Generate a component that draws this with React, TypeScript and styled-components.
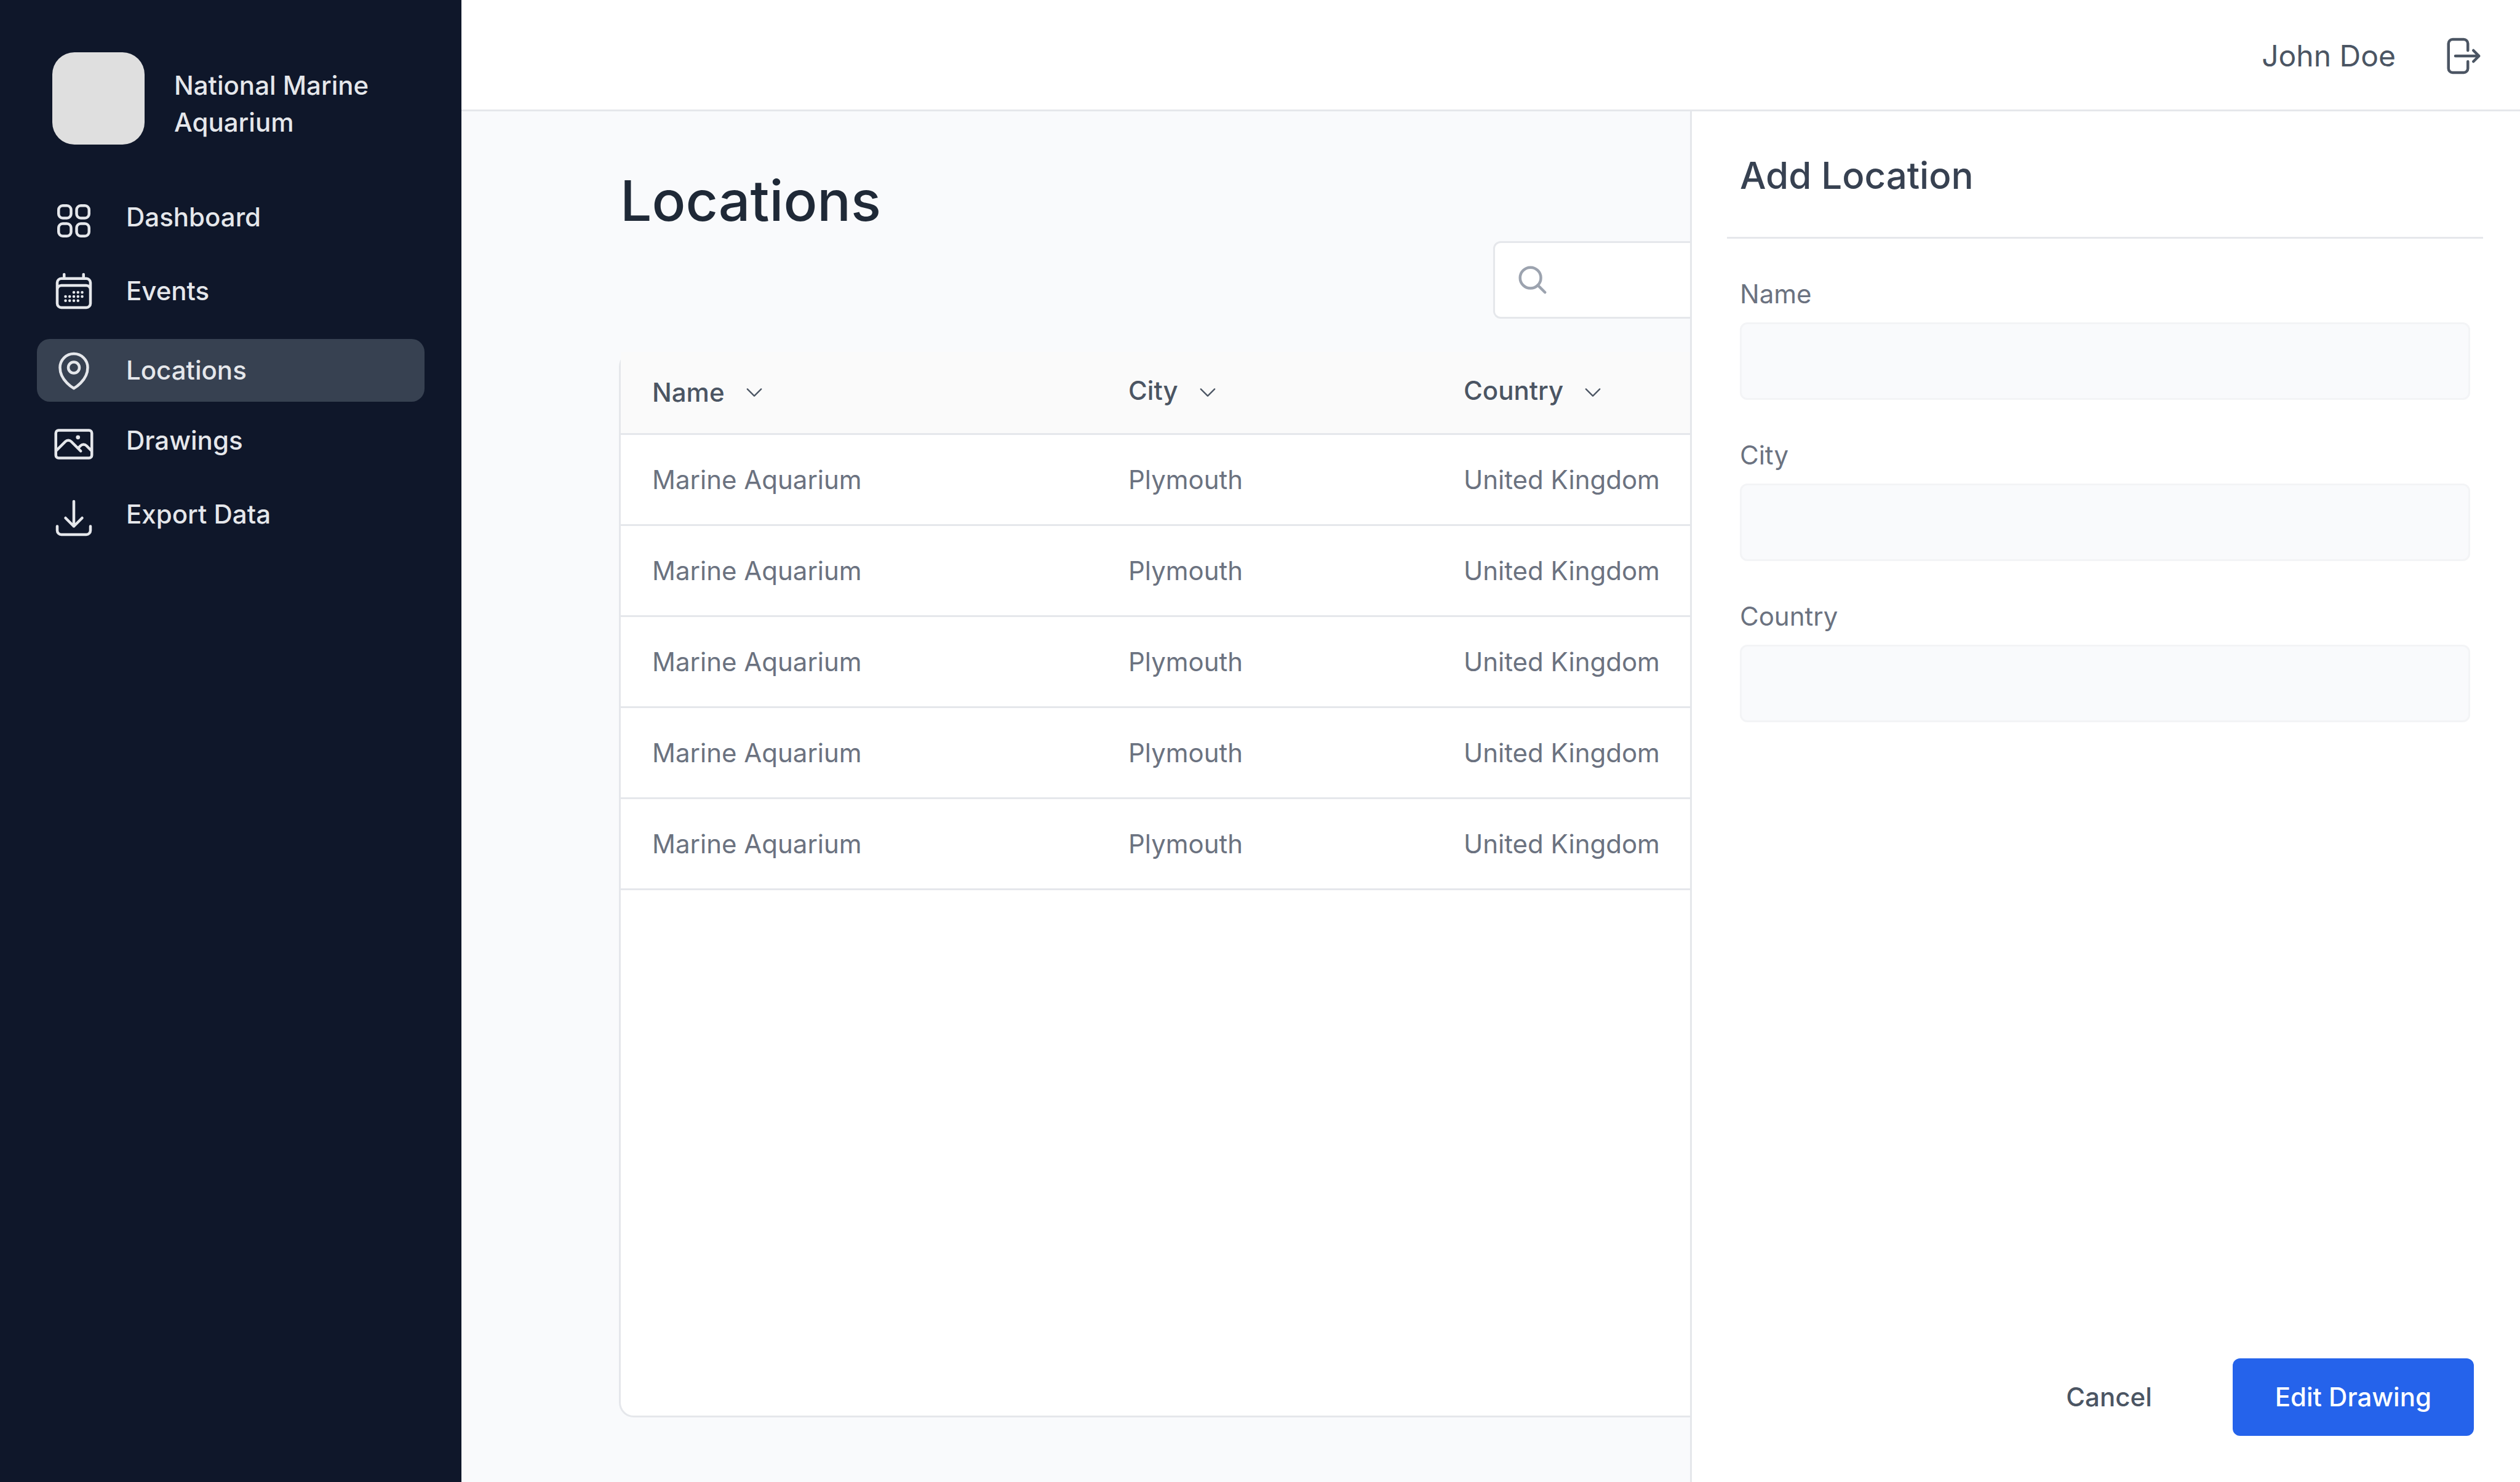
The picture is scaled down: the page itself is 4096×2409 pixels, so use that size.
import React from 'react';
import styled, { createGlobalStyle } from 'styled-components';

const color = {
  navy: '#0f172a',
  active: '#374151',
  onNavy: '#e5e7eb',
  page: '#f9fafc',
  white: '#ffffff',
  tableHead: '#fafafa',
  line: '#e5e7eb',
  fieldLine: '#f3f4f6',
  ink: '#1f2937',
  heading: '#374151',
  strong: '#4b5563',
  muted: '#6b7280',
  faint: '#9ca3af',
  primary: '#2563eb',
};

const GlobalStyle = createGlobalStyle`
  *, *::before, *::after { box-sizing: border-box; }
  body {
    margin: 0;
    font-family: Inter, 'Liberation Sans', sans-serif;
    font-size: 42px;
    line-height: 60px;
    color: ${color.strong};
    background: ${color.page};
  }
  button, input { font: inherit; color: inherit; }
  h1, h2, p, ul { margin: 0; padding: 0; }
`;

const Shell = styled.div`
  display: flex;
  min-height: 100vh;
`;

const Sidebar = styled.aside`
  flex: none;
  width: 750px;
  padding: 85px 60px;
  background: ${color.navy};
  color: ${color.onNavy};
  font-weight: 500;
`;

const Brand = styled.div`
  display: flex;
  align-items: flex-start;
  gap: 48px;
  padding-left: 25px;
  margin-bottom: 73px;
`;

const BrandMark = styled.div`
  flex: none;
  width: 150px;
  height: 150px;
  border-radius: 36px;
  background: #dfdfdf;
`;

const BrandName = styled.p`
  max-width: 340px;
  padding-top: 24px;
`;

const Nav = styled.nav`
  display: flex;
  flex-direction: column;
  gap: 27px;
`;

const NavGroup = styled.ul<{ $gap: number }>`
  display: flex;
  flex-direction: column;
  gap: ${(p) => p.$gap}px;
  list-style: none;
`;

type Align = 'center' | 'flex-start';

const NavLink = styled.a<{ $active?: boolean; $align: Align }>`
  display: flex;
  align-items: ${(p) => p.$align};
  gap: 49px;
  padding: 15px 24px;
  border-radius: 21px;
  color: inherit;
  text-decoration: none;
  background: ${(p) => (p.$active ? color.active : 'transparent')};
`;

const Svg = styled.svg<{ $w: number; $h?: number }>`
  flex: none;
  display: block;
  width: ${(p) => p.$w}px;
  height: ${(p) => p.$h ?? p.$w}px;
  fill: none;
  stroke: currentColor;
  stroke-width: 1.5;
  stroke-linecap: round;
  stroke-linejoin: round;
`;

const Body = styled.div`
  flex: 1;
  min-width: 0;
  display: flex;
  flex-direction: column;
`;

const TopBar = styled.header`
  display: flex;
  justify-content: flex-end;
  align-items: center;
  gap: 70px;
  height: 181px;
  padding: 0 60px;
  background: ${color.white};
  box-shadow: inset 0 -3px ${color.line};
  font-size: 48px;
`;

const IconButton = styled.button`
  padding: 0;
  border: 0;
  background: none;
`;

const Content = styled.div`
  position: relative;
  flex: 1;
  display: flex;
`;

const Main = styled.main`
  flex: 1;
  min-width: 0;
  display: flex;
  flex-direction: column;
  padding: 91px 256px 105px;
`;

const PageTitle = styled.h1`
  padding-left: 2px;
  font-size: 91px;
  font-weight: 500;
  line-height: 108px;
  color: ${color.ink};
`;

const SearchBox = styled.label`
  display: flex;
  align-items: center;
  align-self: flex-end;
  gap: 24px;
  width: 1413px;
  height: 126px;
  margin: 12px 0 54px;
  padding: 0 25px;
  border: 3px solid ${color.line};
  border-radius: 12px;
  background: ${color.white};
  color: ${color.faint};
`;

const SearchInput = styled.input`
  flex: 1;
  min-width: 0;
  border: 0;
  outline: 0;
  background: none;
`;

const Card = styled.section`
  flex: 1;
  border: 3px solid ${color.line};
  border-top: 0;
  border-radius: 24px;
  background: ${color.white};
`;

const Table = styled.table`
  width: 100%;
  border-collapse: separate;
  border-spacing: 0;
  table-layout: fixed;
  text-align: left;
`;

const Col = styled.col<{ $width?: number }>`
  width: ${(p) => (p.$width ? `${p.$width}px` : 'auto')};
`;

const HeadCell = styled.th`
  height: 135px;
  padding: 0 51px;
  border-bottom: 3px solid ${color.line};
  background: ${color.tableHead};
  font-weight: 500;
`;

const SortButton = styled.button<{ $align: Align }>`
  display: flex;
  align-items: ${(p) => p.$align};
  gap: 30px;
  padding: 0;
  border: 0;
  background: none;
  font-weight: 500;
  line-height: 48px;
`;

const Cell = styled.td`
  height: 148px;
  padding: 0 51px;
  border-bottom: 3px solid ${color.line};
  color: ${color.muted};
`;

const Drawer = styled.aside`
  position: absolute;
  top: 0;
  right: 0;
  bottom: 0;
  width: 1349px;
  display: flex;
  flex-direction: column;
  padding: 0 60px 75px 57px;
  border-left: 3px solid ${color.line};
  background: ${color.white};
`;

const DrawerTitle = styled.h2`
  padding: 62px 21px 58px;
  border-bottom: 3px solid ${color.line};
  font-size: 60px;
  font-weight: 500;
  line-height: 84px;
  color: ${color.heading};
`;

const Form = styled.form`
  flex: 1;
  display: flex;
  flex-direction: column;
  gap: 60px;
  padding-top: 60px;
`;

const Field = styled.div`
  display: flex;
  flex-direction: column;
  gap: 16px;
  padding: 0 21px;
`;

const Label = styled.label`
  color: ${color.muted};
`;

const TextInput = styled.input`
  width: 100%;
  height: 126px;
  padding: 0 36px;
  border: 3px solid ${color.fieldLine};
  border-radius: 12px;
  background: ${color.page};
`;

const Actions = styled.div`
  display: flex;
  justify-content: flex-end;
  gap: 62px;
  margin-top: auto;
  padding-right: 15px;
`;

const Button = styled.button<{ $primary?: boolean }>`
  height: 126px;
  padding: 0 69px;
  border: 0;
  border-radius: 12px;
  background: ${(p) => (p.$primary ? color.primary : 'transparent')};
  color: ${(p) => (p.$primary ? color.white : color.strong)};
  font-weight: 500;
`;

const icons = {
  grid: (
    <>
      <rect x="3.75" y="3.75" width="6.75" height="6.75" rx="2.25" />
      <rect x="13.5" y="3.75" width="6.75" height="6.75" rx="2.25" />
      <rect x="3.75" y="13.5" width="6.75" height="6.75" rx="2.25" />
      <rect x="13.5" y="13.5" width="6.75" height="6.75" rx="2.25" />
    </>
  ),
  calendar: (
    <path d="M6.75 3v2.25M17.25 3v2.25M3 18.75V7.5a2.25 2.25 0 012.25-2.25h13.5A2.25 2.25 0 0121 7.5v11.25m-18 0A2.25 2.25 0 005.25 21h13.5A2.25 2.25 0 0021 18.75m-18 0v-7.5A2.25 2.25 0 015.25 9h13.5A2.25 2.25 0 0121 11.25v7.5m-9-6h.008v.008H12v-.008zM12 15h.008v.008H12V15zm0 2.25h.008v.008H12v-.008zM9.75 15h.008v.008H9.75V15zm0 2.25h.008v.008H9.75v-.008zM7.5 15h.008v.008H7.5V15zm0 2.25h.008v.008H7.5v-.008zm6.75-4.5h.008v.008h-.008v-.008zm0 2.25h.008v.008h-.008V15zm0 2.25h.008v.008h-.008v-.008zm2.25-4.5h.008v.008H16.5v-.008zm0 2.25h.008v.008H16.5V15z" />
  ),
  pin: (
    <>
      <path d="M15 10.5a3 3 0 11-6 0 3 3 0 016 0z" />
      <path d="M19.5 10.5c0 7.142-7.5 11.25-7.5 11.25S4.5 17.642 4.5 10.5a7.5 7.5 0 1115 0z" />
    </>
  ),
  photo: (
    <path d="M2.25 15.75l5.159-5.159a2.25 2.25 0 013.182 0l5.159 5.159m-1.5-1.5l1.409-1.409a2.25 2.25 0 013.182 0l2.909 2.909m-18 3.75h16.5a1.5 1.5 0 001.5-1.5V6a1.5 1.5 0 00-1.5-1.5H3.75A1.5 1.5 0 002.25 6v12a1.5 1.5 0 001.5 1.5zm10.5-11.25h.008v.008h-.008V8.25zm.375 0a.375.375 0 11-.75 0 .375.375 0 01.75 0z" />
  ),
  download: (
    <path d="M3 16.5v2.25A2.25 2.25 0 005.25 21h13.5A2.25 2.25 0 0021 18.75V16.5M16.5 12L12 16.5m0 0L7.5 12m4.5 4.5V3" />
  ),
  logout: (
    <path d="M15.75 9V5.25A2.25 2.25 0 0013.5 3h-6a2.25 2.25 0 00-2.25 2.25v13.5A2.25 2.25 0 007.5 21h6a2.25 2.25 0 002.25-2.25V15m3 0l3-3m0 0l-3-3m3 3H9" />
  ),
  search: (
    <>
      <circle cx="10.875" cy="10.875" r="5.625" />
      <path d="M14.85 14.85l3.9 3.9" />
    </>
  ),
  chevron: <path d="M19.5 8.25l-7.5 7.5-7.5-7.5" />,
};

function Icon({ name, width = 72, height }: { name: keyof typeof icons; width?: number; height?: number }) {
  return (
    <Svg viewBox="0 0 24 24" $w={width} $h={height} aria-hidden="true">
      {icons[name]}
    </Svg>
  );
}

type NavEntry = { label: string; icon: keyof typeof icons; align: Align; active?: boolean };

const navGroups: { gap: number; items: NavEntry[] }[] = [
  {
    gap: 12,
    items: [
      { label: 'Dashboard', icon: 'grid', align: 'flex-start' },
      { label: 'Events', icon: 'calendar', align: 'center' },
    ],
  },
  {
    gap: 18,
    items: [
      { label: 'Locations', icon: 'pin', align: 'center', active: true },
      { label: 'Drawings', icon: 'photo', align: 'flex-start' },
      { label: 'Export Data', icon: 'download', align: 'flex-start' },
    ],
  },
];

const columns: { label: string; width?: number; align: Align }[] = [
  { label: 'Name', width: 774, align: 'center' },
  { label: 'City', width: 545, align: 'flex-start' },
  { label: 'Country', align: 'flex-start' },
];

const locations = Array.from({ length: 5 }, (_, id) => ({
  id,
  name: 'Marine Aquarium',
  city: 'Plymouth',
  country: 'United Kingdom',
}));

const fields = ['Name', 'City', 'Country'];

export default function App() {
  return (
    <>
      <GlobalStyle />
      <Shell>
        <Sidebar>
          <Brand>
            <BrandMark />
            <BrandName>National Marine Aquarium</BrandName>
          </Brand>
          <Nav>
            {navGroups.map((group) => (
              <NavGroup key={group.gap} $gap={group.gap}>
                {group.items.map((item) => (
                  <li key={item.label}>
                    <NavLink
                      href="#"
                      $active={item.active}
                      $align={item.align}
                      aria-current={item.active ? 'page' : undefined}
                    >
                      <Icon name={item.icon} />
                      {item.label}
                    </NavLink>
                  </li>
                ))}
              </NavGroup>
            ))}
          </Nav>
        </Sidebar>

        <Body>
          <TopBar>
            <span>John Doe</span>
            <IconButton type="button" aria-label="Log out">
              <Icon name="logout" />
            </IconButton>
          </TopBar>

          <Content>
            <Main>
              <PageTitle>Locations</PageTitle>
              <SearchBox>
                <Icon name="search" />
                <SearchInput type="search" aria-label="Search locations" />
              </SearchBox>
              <Card>
                <Table>
                  <colgroup>
                    {columns.map((c) => (
                      <Col key={c.label} $width={c.width} />
                    ))}
                  </colgroup>
                  <thead>
                    <tr>
                      {columns.map((c) => (
                        <HeadCell key={c.label} scope="col">
                          <SortButton type="button" $align={c.align}>
                            {c.label}
                            <Icon name="chevron" width={36} height={54} />
                          </SortButton>
                        </HeadCell>
                      ))}
                    </tr>
                  </thead>
                  <tbody>
                    {locations.map((l) => (
                      <tr key={l.id}>
                        <Cell>{l.name}</Cell>
                        <Cell>{l.city}</Cell>
                        <Cell>{l.country}</Cell>
                      </tr>
                    ))}
                  </tbody>
                </Table>
              </Card>
            </Main>

            <Drawer>
              <DrawerTitle>Add Location</DrawerTitle>
              <Form>
                {fields.map((f) => (
                  <Field key={f}>
                    <Label htmlFor={`field-${f}`}>{f}</Label>
                    <TextInput id={`field-${f}`} type="text" />
                  </Field>
                ))}
                <Actions>
                  <Button type="button">Cancel</Button>
                  <Button type="submit" $primary>
                    Edit Drawing
                  </Button>
                </Actions>
              </Form>
            </Drawer>
          </Content>
        </Body>
      </Shell>
    </>
  );
}
